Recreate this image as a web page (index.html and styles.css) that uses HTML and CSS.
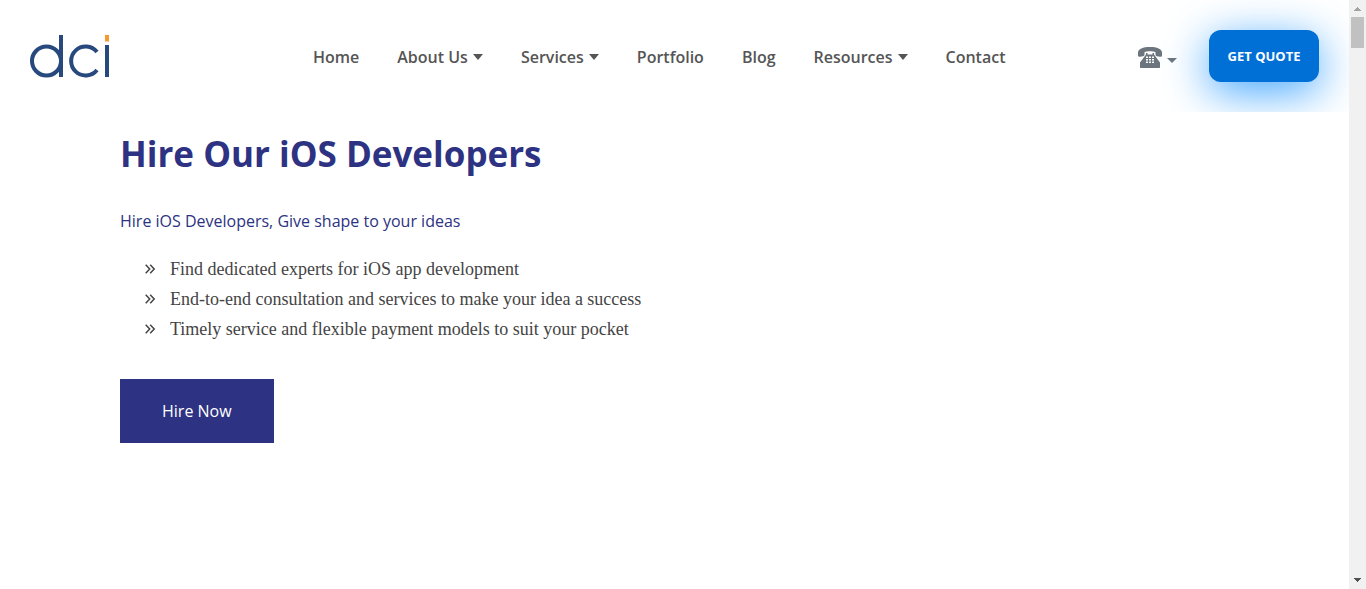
FILE: index.html
```html
<!DOCTYPE html>
<html lang="en">
<head>
<meta charset="utf-8">
<meta name="viewport" content="width=device-width, initial-scale=1">
<title>Hire Our iOS Developers</title>
<link rel="stylesheet" href="styles.css">
</head>
<body>
<div class="page">
  <header class="header">
    <a class="logo" href="#" aria-label="dci">
      <svg width="80" height="44" viewBox="0 0 80 44" fill="none" stroke="#27497d" stroke-width="4">
        <circle cx="16.500" cy="26" r="14.500"/>
        <path d="M31 0V42M67 17A14.500 14.500 0 1 0 67 35M77 10V42"/>
        <path d="M77 0V6.500" stroke="#f79a2e"/>
      </svg>
    </a>
    <nav class="nav">
      <a href="#">Home</a>
      <a class="has-menu" href="#">About Us</a>
      <a class="has-menu" href="#">Services</a>
      <a href="#">Portfolio</a>
      <a href="#">Blog</a>
      <a class="has-menu" href="#">Resources</a>
      <a href="#">Contact</a>
    </nav>
    <div class="actions">
      <button class="phone" type="button" aria-label="Phone numbers">
        <svg width="24" height="21" viewBox="0 0 24 21" fill="#6c757d">
          <path d="M0 8.500V5.500C0 2 5 0 12 0s12 2 12 5.500v3c0 1-1 1.500-2 1.300l-3-.6c-1-.2-1.500-.7-1.500-1.700V5C15 4 9 4 6.500 5v2.500c0 1-.5 1.500-1.500 1.700l-3 .6C1 10 0 9.500 0 8.500z"/>
          <path fill-rule="evenodd" d="M8 6h1.500v1.500h5V6H16v1.500l6 8V20c0 .6-.4 1-1 1H3c-.6 0-1-.4-1-1v-4.500l6-8zM8 9.500v1.500h2V9.500zm3 0v1.500h2V9.500zm3 0v1.500h2V9.500zM8 12v1.500h2V12zm3 0v1.500h2V12zm3 0v1.500h2V12zm-6 2.500V16h2v-1.500zm3 0V16h2v-1.500zm3 0V16h2v-1.500z"/>
        </svg>
      </button>
      <button class="quote" type="button">GET QUOTE</button>
    </div>
  </header>
  <main class="hero">
    <h1>Hire Our iOS Developers</h1>
    <p class="lead">Hire iOS Developers, Give shape to your ideas</p>
    <ul class="points">
      <li><svg class="mark" width="10" height="10" viewBox="0 0 10 10"><path d="M.7.700 4.700 5 .7 9.300M5.200.700 9.200 5 5.200 9.300"/></svg>Find dedicated experts for iOS app development</li>
      <li><svg class="mark" width="10" height="10" viewBox="0 0 10 10"><path d="M.7.700 4.700 5 .7 9.300M5.200.700 9.200 5 5.200 9.300"/></svg>End-to-end consultation and services to make your idea a success</li>
      <li><svg class="mark" width="10" height="10" viewBox="0 0 10 10"><path d="M.7.700 4.700 5 .7 9.300M5.200.700 9.200 5 5.200 9.300"/></svg>Timely service and flexible payment models to suit your pocket</li>
    </ul>
    <a class="hire" href="#">Hire Now</a>
  </main>
</div>
<div class="scrollbar" aria-hidden="true">
  <svg width="17" height="17" viewBox="0 0 17 17" shape-rendering="crispEdges"><path d="M5 11h7L8.500 7z" fill="#a3a3a3"/></svg>
  <div class="thumb"></div>
  <svg class="down" width="17" height="17" viewBox="0 0 17 17" shape-rendering="crispEdges"><path d="M5 6h7L8.500 10z" fill="#505050"/></svg>
</div>
</body>
</html>
```
FILE: styles.css
```css
* { box-sizing: border-box; }
body {
  display: flex;
  min-height: 100vh;
  margin: 0;
  background: #fff;
  font-family: "Open Sans", "Noto Sans", sans-serif;
  font-size: 16px;
}
a { color: inherit; text-decoration: none; }
button { border: 0; background: none; padding: 0; font: inherit; cursor: pointer; }
svg { display: block; }
.page { flex: 1; min-width: 0; }
.header {
  display: flex;
  align-items: center;
  height: 112px;
  padding: 0 30px;
  overflow: hidden;
}
.logo { flex: none; margin-right: 203px; padding-top: 2px; }
.nav {
  display: flex;
  gap: 38px;
  padding-top: 2px;
  color: #555;
  font-weight: 600;
  line-height: 24px;
  white-space: nowrap;
}
.has-menu, .phone { display: flex; align-items: center; gap: 5px; }
.phone { padding-top: 3px; }
.has-menu::after, .phone::after {
  content: "";
  border: 5px solid transparent;
  border-top: 6px solid #555;
  border-bottom: 0;
}
.phone::after { border-top: 5px solid #6c757d; margin-top: 5px; }
.actions { display: flex; align-items: center; gap: 32px; margin-left: auto; }
.quote {
  width: 110px;
  height: 52px;
  border-radius: 12px;
  background: #0070d7;
  box-shadow: 0 10px 45px #41a5ff;
  color: #fff;
  font-size: 13px;
  font-weight: 700;
  white-space: nowrap;
}
.hero { padding: 18px 120px 0; }
h1 { margin: 0; color: #2d3282; font-size: 35px; font-weight: 700; line-height: 48px; }
.lead { margin: 31px 0 0; color: #2d3282; line-height: 24px; }
.points {
  margin: 21px 0 0;
  padding: 0 0 0 25px;
  list-style: none;
  color: #444;
  font-family: "Liberation Serif", serif;
  font-size: 18px;
  line-height: 30px;
}
.points li { display: flex; align-items: center; gap: 15px; }
.mark { fill: none; stroke: #444; stroke-width: 1.5; }
.hire {
  display: inline-block;
  margin-top: 35px;
  padding: 20px 42px;
  background: #2d3282;
  color: #fff;
  line-height: 24px;
}
.scrollbar { display: flex; flex-direction: column; flex: none; width: 17px; background: #f1f1f1; }
.thumb { height: 31px; margin: 0 2px; background: #c1c1c1; }
.down { margin-top: auto; }
```
